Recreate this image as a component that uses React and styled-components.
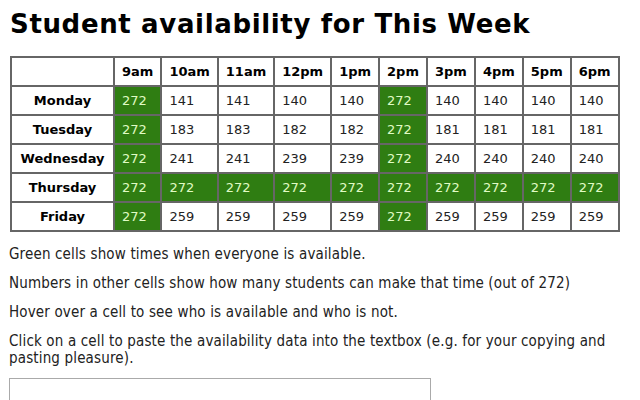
import React from 'react';
import styled, { createGlobalStyle } from 'styled-components';

const times = ['9am', '10am', '11am', '12pm', '1pm', '2pm', '3pm', '4pm', '5pm', '6pm'];

const days = [
  { name: 'Monday', counts: [272, 141, 141, 140, 140, 272, 140, 140, 140, 140] },
  { name: 'Tuesday', counts: [272, 183, 183, 182, 182, 272, 181, 181, 181, 181] },
  { name: 'Wednesday', counts: [272, 241, 241, 239, 239, 272, 240, 240, 240, 240] },
  { name: 'Thursday', counts: [272, 272, 272, 272, 272, 272, 272, 272, 272, 272] },
  { name: 'Friday', counts: [272, 259, 259, 259, 259, 272, 259, 259, 259, 259] },
];

const TOTAL = 272;

export default function App() {
  return (
    <>
      <GlobalStyle />
      <Page>
        <Title>Student availability for This Week</Title>
        <Grid>
          <thead>
            <tr>
              <HeadCell />
              {times.map((t) => (
                <HeadCell key={t} $left>{t}</HeadCell>
              ))}
            </tr>
          </thead>
          <tbody>
            {days.map((d) => (
              <tr key={d.name}>
                <HeadCell>{d.name}</HeadCell>
                {d.counts.map((c, i) => (
                  <Cell key={i} $all={c === TOTAL}>{c}</Cell>
                ))}
              </tr>
            ))}
          </tbody>
        </Grid>
        <Notes>
          <Note>Green cells show times when everyone is available.</Note>
          <Note>Numbers in other cells show how many students can make that time (out of 272)</Note>
          <Note>Hover over a cell to see who is available and who is not.</Note>
          <Note>Click on a cell to paste the availability data into the textbox (e.g. for your copying and pasting pleasure).</Note>
        </Notes>
        <DataBox />
      </Page>
    </>
  );
}

const GlobalStyle = createGlobalStyle`
  body {
    margin: 0;
    background: #fff;
    color: #111;
  }
`;

const Page = styled.div`
  padding: 8px 9px;
`;

const Title = styled.h1`
  margin: 0 0 16px 1px;
  font-family: "DejaVu Sans", Verdana, sans-serif;
  font-size: 26px;
  letter-spacing: 0.65px;
  font-weight: bold;
  line-height: 32px;
  color: #000;
`;

const Grid = styled.table`
  margin-left: 1px;
  border-collapse: separate;
  border-spacing: 0;
  border: 1px solid #666;
  font-family: "DejaVu Sans", Verdana, sans-serif;
  font-size: 13px;
`;

const HeadCell = styled.th`
  height: 27px;
  padding: ${(p) => (p.$left ? '0 7px' : '0 5px')};
  border: 1px solid #666;
  font-weight: bold;
  text-align: ${(p) => (p.$left ? 'left' : 'center')};
  color: #000;
  white-space: nowrap;
  ${(p) => (p.$left ? '' : 'min-width: 91px;')}
`;

const Cell = styled.td`
  height: 27px;
  padding: 0 7px;
  border: 1px solid #666;
  background: ${(p) => (p.$all ? '#2f7d12' : '#fff')};
  color: ${(p) => (p.$all ? '#e0fbc4' : '#222')};
`;

const Notes = styled.div`
  padding-top: 2px;
`;

const Note = styled.p`
  margin: 12px 0 0;
  font-family: "DejaVu Sans Condensed", Tahoma, sans-serif;
  font-size: 15px;
  letter-spacing: 0.15px;
  line-height: 17px;
  color: #222;
`;

const DataBox = styled.textarea`
  display: block;
  margin-top: 11px;
  width: 422px;
  height: 60px;
  box-sizing: border-box;
  border: 1px solid #aaa;
  resize: none;
`;
